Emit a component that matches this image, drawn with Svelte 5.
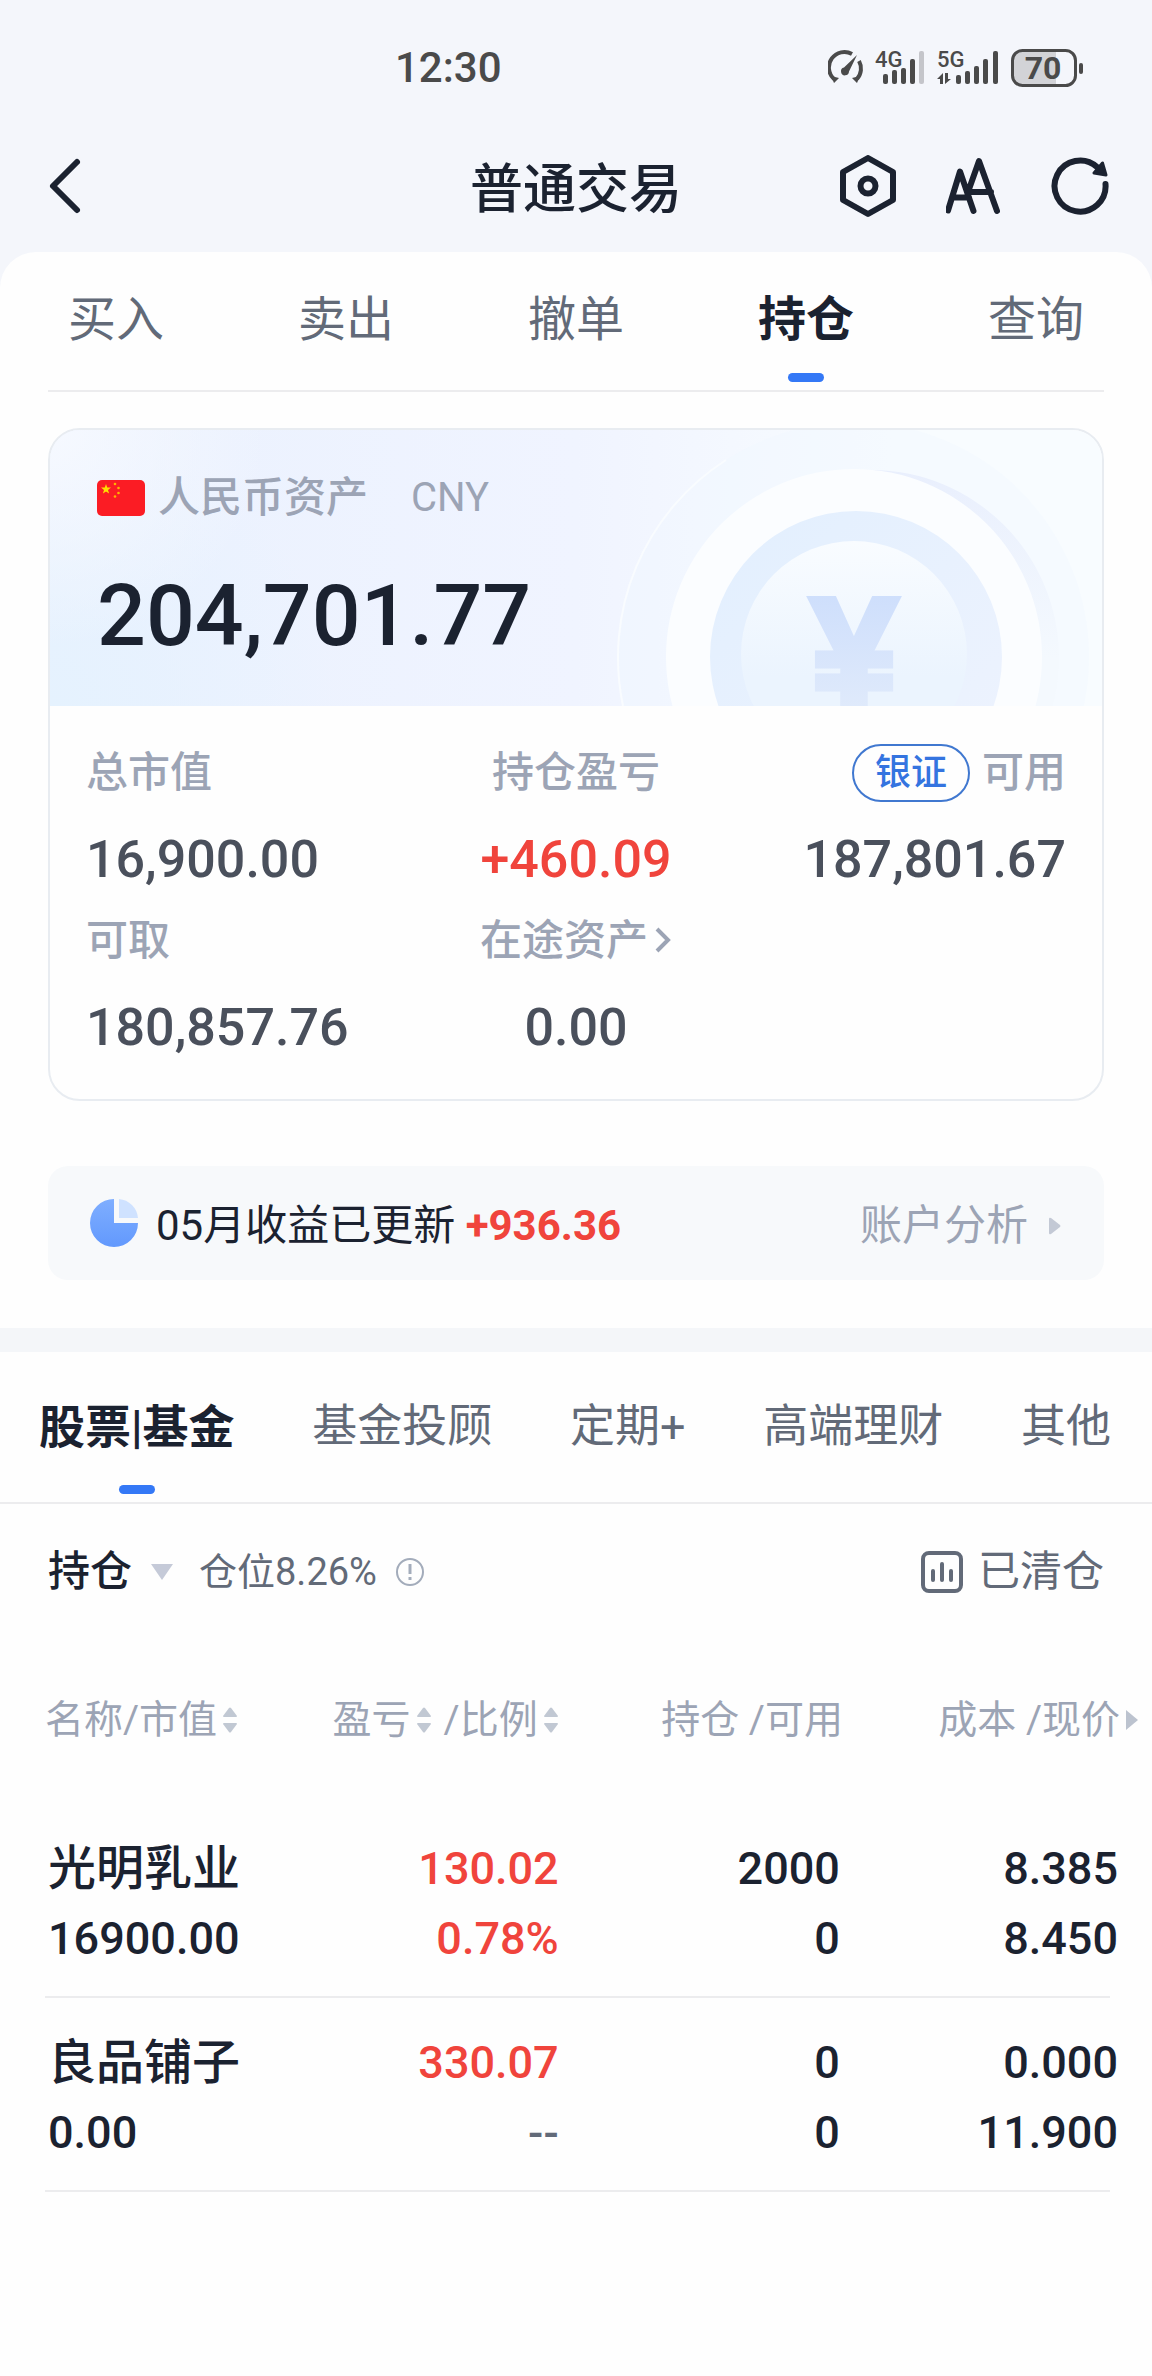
<script lang="ts">
  const tabs = ["买入", "卖出", "撤单", "持仓", "查询"];
  const products = ["股票|基金", "基金投顾", "定期+", "高端理财", "其他"];

  const holdings = [
    {
      name: "光明乳业",
      value: "16900.00",
      profit: "130.02",
      ratio: "0.78%",
      held: "2000",
      usable: "0",
      cost: "8.385",
      price: "8.450",
    },
    {
      name: "良品铺子",
      value: "0.00",
      profit: "330.07",
      ratio: "--",
      held: "0",
      usable: "0",
      cost: "0.000",
      price: "11.900",
    },
  ];

  let activeTab = $state("持仓");
  let activeProduct = $state("股票|基金");
  let view = $state("持仓");
</script>

{#snippet sortIcon()}
  <svg class="sort" width="16" height="28" viewBox="0 0 16 28" aria-hidden="true">
    <path d="M7 2q1-1 2 0l6 8q0 1-1 1H2q-1 0-1-1z" />
    <path d="M7 26q1 1 2 0l6-8q0-1-1-1H2q-1 0-1 1z" />
  </svg>
{/snippet}

<div class="app">
  <div class="status">
    <span class="clock">12:30</span>
    <div class="indicators">
      <svg width="36" height="38" viewBox="0 0 36 38" aria-hidden="true">
        <g fill="none" stroke="#4a4a4a" stroke-width="4">
          <path d="M6 30A15.5 15.5 0 0 1 24 5" />
          <path d="M31 12A15.5 15.5 0 0 1 29 30" />
        </g>
        <path d="M3 27l8 2-5 5zM32 27l-8 2 5 5z" fill="#4a4a4a" />
        <path d="M29 6 21 22.500a4 4 0 1 1-5-4z" fill="#4a4a4a" />
      </svg>
      <svg class="signal" width="51" height="38" viewBox="0 0 51 38" aria-label="4G">
        <text x="0" y="18">4G</text>
        <rect x="8" y="25" width="5" height="10" rx="2" />
        <rect x="17" y="21" width="5" height="14" rx="2" />
        <rect x="26" y="19" width="5" height="16" rx="2" />
        <rect x="35" y="10" width="5" height="25" rx="2" />
        <rect class="weak" x="44" y="2" width="5" height="33" rx="2" />
      </svg>
      <svg class="signal" width="63" height="38" viewBox="0 0 63 38" aria-label="5G">
        <text x="0" y="18">5G</text>
        <path d="M6 35V24L0 30h3v5zM8 24v11l6-5h-3v-6z" />
        <rect x="19" y="26" width="5" height="9" rx="2" />
        <rect x="28" y="22" width="5" height="13" rx="2" />
        <rect x="37" y="17" width="5" height="18" rx="2" />
        <rect x="46" y="10" width="5" height="25" rx="2" />
        <rect x="56" y="2" width="5" height="33" rx="2" />
      </svg>
      <svg width="74" height="38" viewBox="0 0 74 38" aria-label="70">
        <path d="M12 2h33v34H12A10 10 0 0 1 2 26V12A10 10 0 0 1 12 2z" fill="#d2d3d7" />
        <rect x="1.500" y="1.500" width="63" height="35" rx="10" fill="none" stroke="#4a4a4a" stroke-width="3" />
        <rect x="68" y="14" width="4" height="11" rx="2" fill="#4a4a4a" />
        <text class="level" x="32" y="30" text-anchor="middle">70</text>
      </svg>
    </div>
  </div>

  <header>
    <button class="back" aria-label="返回">
      <svg width="44" height="60" viewBox="0 0 44 60">
        <path d="M37 5 13 29l24 24" />
      </svg>
    </button>
    <h1>普通交易</h1>
    <div class="actions">
      <button aria-label="设置">
        <svg width="60" height="64" viewBox="0 0 60 64">
          <path d="M30 3 55 17v28L30 59 5 45V17z" />
          <circle cx="30" cy="31" r="7.500" />
        </svg>
      </button>
      <button aria-label="字号">
        <svg width="56" height="64" viewBox="0 0 56 64">
          <path d="M2 55.500 14 16.500 27.500 56M6 42.500h17M22 37 33 6 51 56M24 37h21" />
        </svg>
      </button>
      <button aria-label="刷新">
        <svg width="60" height="64" viewBox="0 0 60 64">
          <path d="M55.500 29A25.500 25.500 0 1 1 47 12" />
          <path class="solid" d="M52.500 8l3.500 12-12-2z" />
        </svg>
      </button>
    </div>
  </header>

  <main>
    <nav class="tabs">
      {#each tabs as tab}
        <button class:active={tab === activeTab} onclick={() => (activeTab = tab)}>{tab}</button>
      {/each}
    </nav>

    <section class="card">
      <div class="total">
        <svg class="coin" width="600" height="276" viewBox="0 0 600 276" aria-hidden="true">
          <defs>
            <linearGradient id="ring" x1="0" y1="0" x2="1" y2="1">
              <stop offset="0" stop-color="#e2effe" />
              <stop offset="1" stop-color="#eef3fe" />
            </linearGradient>
            <linearGradient id="face" x1="0" y1="0" x2="0" y2="1">
              <stop offset="0" stop-color="#f9fcff" />
              <stop offset="0.600" stop-color="#ebf4fe" />
            </linearGradient>
            <linearGradient id="yen" x1="0" y1="0" x2="0" y2="1">
              <stop offset="0" stop-color="#cadcfc" />
              <stop offset="1" stop-color="#e4edfb" />
            </linearGradient>
            <linearGradient id="shade" x1="0" y1="0" x2="0" y2="1">
              <stop offset="0" stop-color="#e9effd" />
              <stop offset="0.500" stop-color="#f4f9fe" />
            </linearGradient>
          </defs>
          <circle cx="352" cy="227" r="235" fill="#f1f7ff" fill-opacity="0.400" />
          <path d="M121 276A235 235 0 0 1 224 30" fill="none" stroke="#f9fcff" stroke-width="2" />
          <circle cx="369" cy="228" r="188" fill="url(#shade)" />
          <circle cx="352" cy="227" r="188" fill="#fbfdff" />
          <circle cx="354" cy="227" r="146" fill="url(#ring)" />
          <circle cx="352" cy="224" r="113" fill="url(#face)" />
          <text x="352" y="276" text-anchor="middle">¥</text>
        </svg>
        <div class="currency">
          <svg width="48" height="36" viewBox="0 0 48 36" aria-hidden="true">
            <rect width="48" height="36" rx="5" fill="#fb1c24" />
            <path
              d="M9 4l1.200 3.600H14l-3 2.300 1.100 3.700L9 11.400l-3.100 2.200L7 9.900 4 7.600h3.800z"
              fill="#ffde00"
            />
            <g fill="#ffb400">
              <circle cx="18" cy="4" r="1.300" />
              <circle cx="21.500" cy="8" r="1.300" />
              <circle cx="21.500" cy="13" r="1.300" />
              <circle cx="18" cy="16.500" r="1.300" />
            </g>
          </svg>
          <span>人民币资产</span>
          <span class="code">CNY</span>
        </div>
        <strong>204,701.77</strong>
      </div>

      <dl>
        <div>
          <dt>总市值</dt>
          <dd>16,900.00</dd>
        </div>
        <div>
          <dt>持仓盈亏</dt>
          <dd class="up">+460.09</dd>
        </div>
        <div>
          <dt><button class="pill">银证</button>可用</dt>
          <dd>187,801.67</dd>
        </div>
        <div>
          <dt>可取</dt>
          <dd>180,857.76</dd>
        </div>
        <div>
          <dt>
            <button class="link">
              在途资产
              <svg width="18" height="30" viewBox="0 0 18 30" aria-hidden="true">
                <path d="M3 3l11 11L3 25" />
              </svg>
            </button>
          </dt>
          <dd>0.00</dd>
        </div>
      </dl>
    </section>

    <section class="notice">
      <svg width="48" height="48" viewBox="0 0 48 48" aria-hidden="true">
        <defs>
          <linearGradient id="pie" x1="0" y1="0" x2="0" y2="1">
            <stop offset="0" stop-color="#7faeff" />
            <stop offset="1" stop-color="#6299fd" />
          </linearGradient>
        </defs>
        <path d="M24 0v24h24A24 24 0 1 1 24 0z" fill="url(#pie)" />
        <path d="M29 0a21 21 0 0 1 19 19H29z" fill="#cfe2ff" />
      </svg>
      <p>05月收益已更新 <strong>+936.36</strong></p>
      <a href="#analysis">
        账户分析
        <svg width="14" height="20" viewBox="0 0 14 20" aria-hidden="true">
          <path d="M1 3q0-2 2-1l9 7q1 1 0 2l-9 7q-2 1-2-1z" fill="#c3c9d5" />
        </svg>
      </a>
    </section>

    <nav class="products">
      {#each products as product}
        <button class:active={product === activeProduct} onclick={() => (activeProduct = product)}>
          {product}
        </button>
      {/each}
    </nav>

    <div class="filter">
      <select bind:value={view} aria-label="持仓">
        <option>持仓</option>
      </select>
      <svg width="22" height="16" viewBox="0 0 22 16" aria-hidden="true">
        <path d="M0 0h22L11 16z" fill="#c5cad8" />
      </svg>
      <span class="position">仓位8.26%</span>
      <button class="info" aria-label="仓位">
        <svg width="30" height="30" viewBox="0 0 30 30">
          <circle cx="15" cy="15" r="13" fill="none" stroke="#a3acbb" stroke-width="2" />
          <path d="M15 7v10M15 20v3" stroke="#a3acbb" stroke-width="3" />
        </svg>
      </button>
      <button class="closed">
        <svg width="42" height="42" viewBox="0 0 42 42" aria-hidden="true">
          <rect x="2" y="2" width="38" height="38" rx="6" />
          <path d="M12 20v9M21 13v16M30 20v9" />
        </svg>
        已清仓
      </button>
    </div>

    <table>
      <thead>
        <tr>
          <th><button>名称/市值{@render sortIcon()}</button></th>
          <th>
            <div>
              <button>盈亏{@render sortIcon()}</button>
              <button>/比例{@render sortIcon()}</button>
            </div>
          </th>
          <th>持仓 /可用</th>
          <th>
            <div>
              成本 /现价
              <svg width="12" height="20" viewBox="0 0 12 20" aria-hidden="true">
                <path d="M0 0 12 10 0 20z" fill="#bcc3cf" />
              </svg>
            </div>
          </th>
        </tr>
      </thead>
      <tbody>
        {#each holdings as row}
          <tr>
            <td>
              <span class="name">{row.name}</span>
              <span>{row.value}</span>
            </td>
            <td>
              <span class="up">{row.profit}</span>
              <span class={row.ratio === "--" ? "none" : "up"}>{row.ratio}</span>
            </td>
            <td>
              <span>{row.held}</span>
              <span>{row.usable}</span>
            </td>
            <td>
              <span>{row.cost}</span>
              <span>{row.price}</span>
            </td>
          </tr>
        {/each}
      </tbody>
    </table>
  </main>
</div>

<style>
  :global(body) {
    margin: 0;
    background: #f4f6fb;
  }

  .app {
    min-height: 100vh;
    display: flex;
    flex-direction: column;
    font-family: Roboto, "Noto Sans CJK SC", sans-serif;
    font-size: 42px;
    line-height: 60px;
    color: #1b2230;
  }

  svg {
    display: block;
    flex: none;
  }

  button,
  select {
    appearance: none;
    padding: 0;
    border: 0;
    background: none;
    font: inherit;
    color: inherit;
    cursor: pointer;
  }

  /* status bar */

  .status {
    height: 136px;
    padding: 0 67px 0 395px;
    display: flex;
    align-items: center;
    justify-content: space-between;
    color: #4a4a4a;
  }

  .clock {
    font-weight: 500;
  }

  .indicators {
    display: flex;
    gap: 11px;
  }

  .signal {
    fill: #4a4a4a;
  }

  .signal text {
    font-size: 22px;
    font-weight: 500;
  }

  .weak {
    fill: #c4c5ca;
  }

  .level {
    fill: #4a4a4a;
    font-size: 32px;
    font-weight: 700;
  }

  /* title bar */

  header {
    height: 116px;
    padding: 0 40px 14px;
    box-sizing: border-box;
    display: grid;
    grid-template-columns: 1fr auto 1fr;
    align-items: center;
  }

  header svg {
    fill: none;
    stroke: #1b2230;
    stroke-width: 6;
    stroke-linecap: round;
    stroke-linejoin: round;
  }

  header .solid {
    fill: #1b2230;
    stroke-width: 3;
  }

  .back {
    justify-self: start;
  }

  h1 {
    margin: 0;
    padding-top: 6px;
    font-size: 53px;
    font-weight: 500;
    line-height: 64px;
  }

  .actions {
    justify-self: end;
    display: flex;
    gap: 48px;
    margin-right: 2px;
  }

  main {
    flex: 1;
    border-radius: 36px 36px 0 0;
    background: #fefefe;
  }

  /* tabs */

  .tabs,
  .products {
    display: flex;
    justify-content: space-between;
    color: #626a78;
  }

  .tabs {
    margin: 0 48px;
    padding: 0 20px;
    border-bottom: 2px solid #ececee;
    font-size: 48px;
  }

  .tabs button {
    height: 138px;
    padding-bottom: 2px;
  }

  .products {
    padding: 0 41px 0 39px;
    border-top: 24px solid #f4f6f9;
    border-bottom: 2px solid #ececee;
    font-size: 45px;
  }

  .products button {
    height: 150px;
  }

  .tabs button,
  .products button {
    position: relative;
    white-space: nowrap;
  }

  .active {
    color: #1b2230;
    font-weight: 700;
  }

  .products .active {
    font-size: 46px;
  }

  .active::after {
    content: "";
    position: absolute;
    left: 50%;
    bottom: 8px;
    width: 36px;
    height: 9px;
    margin-left: -18px;
    border-radius: 5px;
    background: #3478f6;
  }

  /* asset card */

  .card {
    margin: 36px 48px 0;
    border: 2px solid #e8ecf1;
    border-radius: 32px;
    overflow: hidden;
  }

  .total {
    position: relative;
    height: 276px;
    padding: 38px 47px 0;
    box-sizing: border-box;
    background:
      radial-gradient(circle at 0 0, #f6f9ff, transparent 20%),
      radial-gradient(circle at 0 100%, #e5f2fe, transparent 26%),
      linear-gradient(90deg, #eaf1fe, #f0f4ff 50%, #f8fcff 80%);
  }

  .coin {
    position: absolute;
    top: 0;
    right: 0;
  }

  .coin text {
    font-family: "Liberation Sans", sans-serif;
    font-size: 154px;
    font-weight: 700;
    fill: url(#yen);
    stroke: url(#yen);
    stroke-width: 7;
  }

  .currency {
    position: relative;
    display: flex;
    align-items: center;
    gap: 13px;
    color: #9ca4b5;
    font-weight: 500;
  }

  .code {
    margin-left: 30px;
    font-size: 40px;
    font-weight: 400;
  }

  .total strong {
    position: relative;
    display: block;
    margin-top: 36px;
    font-size: 86px;
    font-weight: 500;
    line-height: 104px;
  }

  dl {
    margin: 0;
    padding: 25px 36px 32px;
    display: grid;
    grid-template-columns: 1fr 1fr 1fr;
  }

  dl > div {
    height: 168px;
    display: flex;
    flex-direction: column;
    align-items: center;
    gap: 6px;
  }

  dl > div:nth-child(3n + 1) {
    align-items: flex-start;
  }

  dl > div:nth-child(3n) {
    align-items: flex-end;
  }

  dt {
    height: 84px;
    display: flex;
    align-items: center;
    gap: 12px;
    color: #9ca4b5;
    font-weight: 500;
    white-space: nowrap;
  }

  dd {
    margin: 0;
    font-size: 52px;
    font-weight: 500;
    line-height: 78px;
    color: #4a505c;
  }

  .pill {
    height: 58px;
    padding: 0 21px;
    border: 2px solid #4078d0;
    border-radius: 29px;
    font-size: 36px;
    font-weight: 500;
    line-height: 54px;
    color: #3474e0;
  }

  .link {
    display: flex;
    align-items: center;
    gap: 6px;
  }

  .link path {
    fill: none;
    stroke: #9ca4b5;
    stroke-width: 4;
  }

  .up,
  dd.up {
    color: #f0443c;
  }

  /* monthly notice */

  .notice {
    margin: 65px 48px 48px;
    height: 114px;
    padding: 0 42px;
    border-radius: 20px;
    display: flex;
    align-items: center;
    background: #f7f9fb;
  }

  .notice p,
  .notice a {
    padding-top: 6px;
  }

  .notice p {
    margin: 0 0 0 18px;
  }

  .notice strong {
    color: #f0443c;
  }

  .notice a {
    margin-left: auto;
    display: flex;
    align-items: center;
    gap: 20px;
    color: #9ca4b5;
    text-decoration: none;
  }

  /* filter row */

  .filter {
    height: 136px;
    padding: 0 48px;
    display: flex;
    align-items: center;
    color: #626a78;
  }

  select {
    margin-right: 18px;
    font-weight: 500;
    color: #1b2230;
  }

  .position {
    margin: 0 18px 0 26px;
    font-size: 38px;
  }

  .closed {
    margin-left: auto;
    display: flex;
    align-items: center;
    gap: 15px;
  }

  .closed svg {
    fill: none;
    stroke: #626a78;
    stroke-width: 4;
    stroke-linecap: round;
  }

  /* holdings */

  table {
    width: calc(100% - 59px);
    margin-left: 45px;
    border-collapse: collapse;
    table-layout: fixed;
  }

  th,
  td {
    padding: 0;
    text-align: right;
    white-space: nowrap;
  }

  th:first-child,
  td:first-child {
    width: 21%;
    text-align: left;
  }

  th:last-child,
  td:last-child {
    width: 27%;
  }

  th {
    height: 160px;
    padding-bottom: 4px;
    font-size: 39px;
    font-weight: 400;
    color: #9ca4b5;
  }

  th div {
    display: flex;
    align-items: center;
    justify-content: flex-end;
    gap: 12px;
  }

  th:last-child div {
    gap: 6px;
  }

  th button {
    display: flex;
    align-items: center;
    gap: 5px;
  }

  .sort {
    fill: #c1c8d3;
  }

  tbody tr {
    background: linear-gradient(#ececee, #ececee) left bottom / calc(100% - 28px) 2px no-repeat;
  }

  td {
    padding: 30px 0 24px;
    font-size: 45px;
    font-weight: 500;
    line-height: 70px;
  }

  td:first-child {
    padding-left: 3px;
  }

  td:nth-child(3) {
    padding-right: 3px;
  }

  td:last-child {
    padding-right: 20px;
  }

  td span {
    display: block;
  }

  .name {
    font-size: 48px;
  }

  .none {
    color: #626a78;
  }
</style>
